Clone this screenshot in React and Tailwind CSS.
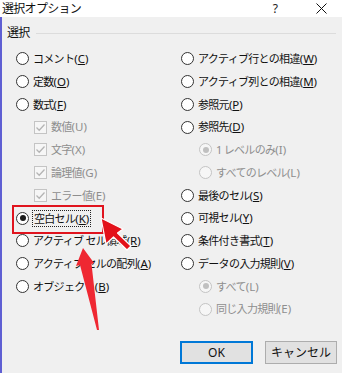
import React from 'react';

const left = [
  { type: 'radio', text: 'コメント', k: 'C' },
  { type: 'radio', text: '定数', k: 'O' },
  { type: 'radio', text: '数式', k: 'F' },
  { type: 'check', text: '数値', k: 'U', sub: true, disabled: true, checked: true },
  { type: 'check', text: '文字', k: 'X', sub: true, disabled: true, checked: true },
  { type: 'check', text: '論理値', k: 'G', sub: true, disabled: true, checked: true },
  { type: 'check', text: 'エラー値', k: 'E', sub: true, disabled: true, checked: true },
  { type: 'radio', text: '空白セル', k: 'K', checked: true, focus: true },
  { type: 'radio', text: 'アクティブ セル領域', k: 'R' },
  { type: 'radio', text: 'アクティブ セルの配列', k: 'A' },
  { type: 'radio', text: 'オブジェクト', k: 'B' },
];

const right = [
  { type: 'radio', text: 'アクティブ行との相違', k: 'W' },
  { type: 'radio', text: 'アクティブ列との相違', k: 'M' },
  { type: 'radio', text: '参照元', k: 'P' },
  { type: 'radio', text: '参照先', k: 'D' },
  { type: 'radio', text: '1 レベルのみ', k: 'I', sub: true, disabled: true, checked: true },
  { type: 'radio', text: 'すべてのレベル', k: 'L', sub: true, disabled: true },
  { type: 'radio', text: '最後のセル', k: 'S' },
  { type: 'radio', text: '可視セル', k: 'Y' },
  { type: 'radio', text: '条件付き書式', k: 'T' },
  { type: 'radio', text: 'データの入力規則', k: 'V' },
  { type: 'radio', text: 'すべて', k: 'L', sub: true, disabled: true, checked: true },
  { type: 'radio', text: '同じ入力規則', k: 'E', sub: true, disabled: true },
];

const Radio = ({ checked, disabled }) => (
  <span
    className={`w-[13px] h-[13px] rounded-full border flex items-center justify-center shrink-0 ${
      disabled ? 'border-[#c4c4c4] bg-[#f6f6f6]' : 'border-[#333333] bg-white'
    }`}
  >
    {checked && (
      <span className={`w-[6px] h-[6px] rounded-full ${disabled ? 'bg-[#c0c0c0]' : 'bg-[#1a1a1a]'}`} />
    )}
  </span>
);

const Check = ({ checked }) => (
  <span className="w-[13px] h-[13px] border border-[#c4c4c4] bg-[#f6f6f6] flex items-center justify-center shrink-0">
    {checked && (
      <svg width="11" height="11" viewBox="0 0 11 11">
        <path d="M1.5 5.5 L4.2 8.2 L9.5 2.5" fill="none" stroke="#b4b4b4" strokeWidth="1.3" />
      </svg>
    )}
  </span>
);

const Row = ({ item }) => {
  const label = item.disabled ? (
    <span className="text-[#8e8e8e]">
      {item.text}
      <span className="tracking-normal text-[11.5px]">({item.k})</span>
    </span>
  ) : (
    <span className="text-[#111111]">
      {item.text}
      <span className="tracking-normal text-[11.5px]">
        (<u className="underline-offset-[1px]">{item.k}</u>)
      </span>
    </span>
  );
  return (
    <div className={`h-[22.75px] flex items-center gap-[4px] ${item.sub ? 'pl-[18px]' : ''}`}>
      {item.type === 'radio' ? (
        <Radio checked={item.checked} disabled={item.disabled} />
      ) : (
        <Check checked={item.checked} />
      )}
      {item.focus ? (
        <span className="outline outline-1 outline-dotted outline-[#222] px-[1px] leading-[15px]">{label}</span>
      ) : (
        label
      )}
    </div>
  );
};

export default function App() {
  return (
    <div
      className="w-[342px] h-[373px] relative overflow-hidden bg-[#f0f0f0] text-[11px] tracking-[-0.7px]"
      style={{ fontFamily: '"Noto Sans", "Noto Sans CJK JP", sans-serif' }}
    >
      {/* title bar */}
      <div className="h-[17px] bg-white flex items-center">
        <span className="pl-[2px] text-[12px] text-[#111] leading-none">選択オプション</span>
        <span className="ml-auto w-[20px] text-center text-[12px] text-[#222] leading-none">?</span>
        <span className="ml-[26px] mr-[11px] w-[20px] flex justify-center">
          <svg width="11" height="11" viewBox="0 0 11 11">
            <path d="M0.5 0.5 L10.5 10.5 M10.5 0.5 L0.5 10.5" stroke="#111" strokeWidth="1" />
          </svg>
        </span>
      </div>

      {/* body */}
      <div className="h-[356px] border-l-2 border-[#5f5fd3] flex flex-col">
        <div className="mt-[8px] h-[16px] flex items-center pl-[5px] pr-[6px]">
          <span className="text-[12px] text-[#111] leading-none">選択</span>
          <span className="flex-1 h-px bg-[#dcdcdc] ml-[6px]" />
        </div>

        <div className="mt-[6.6px] pl-[14px] grid grid-cols-[165px_1fr]">
          <div className="flex flex-col">
            {left.map((item, i) => (
              <Row key={i} item={item} />
            ))}
          </div>
          <div className="flex flex-col">
            {right.map((item, i) => (
              <Row key={i} item={item} />
            ))}
          </div>
        </div>

        <div className="mt-auto mb-[9px] flex justify-end gap-[12px] pr-[5px] text-[12px] tracking-normal">
          <button className="w-[73px] h-[23px] border-2 border-[#0078d7] bg-[#e1e1e1] text-[#111] leading-none">
            OK
          </button>
          <button className="w-[72px] h-[23px] border border-[#adadad] bg-[#e1e1e1] text-[#111] leading-none">
            キャンセル
          </button>
        </div>
      </div>

      {/* annotation: red box */}
      <div className="absolute left-[12px] top-[205px] w-[92px] h-[29px] border-2 border-[#e0141e]" />

      {/* annotation: arrows */}
      <svg className="absolute inset-0 pointer-events-none" width="342" height="373" viewBox="0 0 342 373">
        <polygon
          points="101,218 123,229 117.5,233 131,246 127,250 113.5,237 106,244"
          fill="#e3121b"
          stroke="#ffffff"
          strokeWidth="1.2"
          strokeLinejoin="round"
        />
        <polygon points="83,248 94,263 91.5,264 99,330 97,330 80,265 76,266" fill="#ef2832" />
      </svg>
    </div>
  );
}
